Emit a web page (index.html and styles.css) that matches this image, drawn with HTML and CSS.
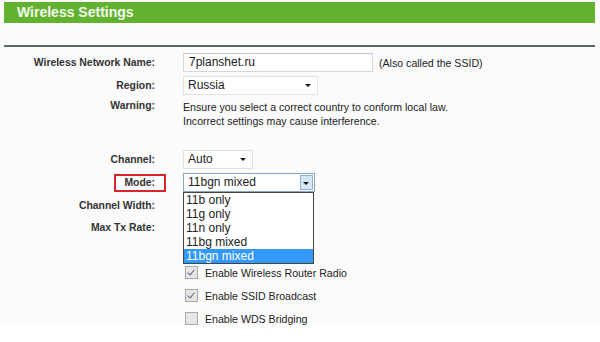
FILE: index.html
```html
<!doctype html>
<html>
<head>
<meta charset="utf-8">
<title>Wireless Settings</title>
<link rel="stylesheet" href="styles.css">
</head>
<body>
<div class="page">
	<div class="title">Wireless Settings</div>
	<div class="rule"></div>

	<div class="row r-name">
		<div class="label">Wireless Network Name:</div>
		<div class="value">
			<div class="textbox">7planshet.ru</div>
			<span class="hint">(Also called the SSID)</span>
		</div>
	</div>
	<div class="row r-region">
		<div class="label">Region:</div>
		<div class="value">
			<div class="select w-region">Russia<span class="arrow"></span></div>
		</div>
	</div>
	<div class="row r-warn">
		<div class="label">Warning:</div>
		<div class="value note">Ensure you select a correct country to conform local law.<br>Incorrect settings may cause interference.</div>
	</div>

	<div class="row r-channel">
		<div class="label">Channel:</div>
		<div class="value">
			<div class="select w-channel">Auto<span class="arrow"></span></div>
		</div>
	</div>
	<div class="row r-mode">
		<div class="label"><span class="mark">Mode:</span></div>
		<div class="value">
			<div class="select w-mode open">11bgn mixed<span class="btn"><span class="arrow"></span></span>
				<!-- раскрытый список поверх строк ниже -->
				<ul class="options">
					<li>11b only</li>
					<li>11g only</li>
					<li>11n only</li>
					<li>11bg mixed</li>
					<li class="sel">11bgn mixed</li>
				</ul>
			</div>
		</div>
	</div>
	<div class="row r-width">
		<div class="label">Channel Width:</div>
		<div class="value"></div>
	</div>
	<div class="row r-rate">
		<div class="label">Max Tx Rate:</div>
		<div class="value"></div>
	</div>

	<div class="checks">
		<div class="row r-check">
			<div class="label"></div>
			<div class="value"><span class="box on"></span>Enable Wireless Router Radio</div>
		</div>
		<div class="row r-check">
			<div class="label"></div>
			<div class="value"><span class="box on"></span>Enable SSID Broadcast</div>
		</div>
		<div class="row r-check">
			<div class="label"></div>
			<div class="value"><span class="box"></span>Enable WDS Bridging</div>
		</div>
	</div>
</div>
</body>
</html>
```

FILE: styles.css
```css
body
{
	margin: 0;
	background: #ffffff;
	font-family: "Liberation Sans", Arial, sans-serif;
	font-size: 10.6px;
	color: #222;
}
.page
{
	background: #fbfbfb;
	padding: 2px 5px 0 4px;
	height: 323px;
}
/*шапка*/
.title
{
	height: 21px;
	line-height: 21px;
	background: #63b22f;
	color: #f3f9ee;
	font-weight: bold;
	font-size: 14px;
	padding-left: 13px;
}
.rule
{
	margin-top: 22px;
	height: 2px;
	background: #566b60;
	margin-bottom: 4px;
}
/*строки формы*/
.row
{
	display: flex;
	align-items: center;
	height: 23px;
}
.label
{
	width: 151px;
	flex: none;
	text-align: right;
	font-weight: bold;
	font-size: 10.4px;
	color: #333;
	margin-right: 28px;
}
.value
{
	display: flex;
	align-items: center;
	position: relative;
}
.r-warn
{
	align-items: flex-start;
	height: 48px;
	padding-top: 3px;
}
.note
{
	display: block;
	line-height: 14px;
}
.r-rate
{
	height: 21px;
	margin-bottom: 23px;
}
/*поле ввода*/
.textbox
{
	width: 183px;
	height: 17px;
	line-height: 17px;
	border: 1px solid #d6d6d6;
	border-top-color: #c4c4c4;
	background: #fff;
	padding-left: 5px;
	font-size: 12px;
}
.hint
{
	margin-left: 6px;
}
/*выпадающие списки*/
.select
{
	position: relative;
	height: 17px;
	line-height: 17px;
	border: 1px solid #e2e2e2;
	background: #fff;
	padding-left: 4px;
	font-size: 12px;
	box-sizing: content-box;
}
.w-region { width: 129px; }
.w-channel { width: 64px; }
.w-mode
{
	width: 126px;
	border-color: #8aa6c1;
}
.arrow
{
	position: absolute;
	right: 6px;
	top: 7px;
	border-left: 3px solid transparent;
	border-right: 3px solid transparent;
	border-top: 3px solid #111;
}
.btn
{
	position: absolute;
	right: 1px;
	top: 1px;
	width: 13px;
	height: 15px;
	background: #d6e7f6;
	border: 1px solid #8ab4dc;
	box-sizing: border-box;
}
.btn .arrow
{
	right: 3px;
	top: 6px;
}
.options
{
	position: absolute;
	left: -1px;
	top: 18px;
	width: 129px;
	margin: 0;
	padding: 0;
	list-style: none;
	background: #fff;
	border: 1px solid #444;
	z-index: 2;
}
.options li
{
	height: 14px;
	line-height: 14px;
	padding-left: 2px;
	font-size: 12px;
}
.options li.sel
{
	background: #3399ff;
	color: #fff;
}
/*красная рамка вокруг Mode*/
.mark
{
	display: inline-block;
	border: 2px solid #d8262e;
	line-height: 14px;
	padding: 0 9px 0 8px;
	margin-right: -11px;
}
/*флажки*/
.box
{
	width: 11px;
	height: 11px;
	border: 1px solid #a9a9a9;
	background: #e6e6e6;
	margin: 0 7px 0 2px;
	position: relative;
}
.box.on::after
{
	content: "";
	position: absolute;
	left: 3px;
	top: 1px;
	width: 3px;
	height: 6px;
	border-right: 1.5px solid #56657a;
	border-bottom: 1.5px solid #56657a;
	transform: rotate(40deg);
}
```
